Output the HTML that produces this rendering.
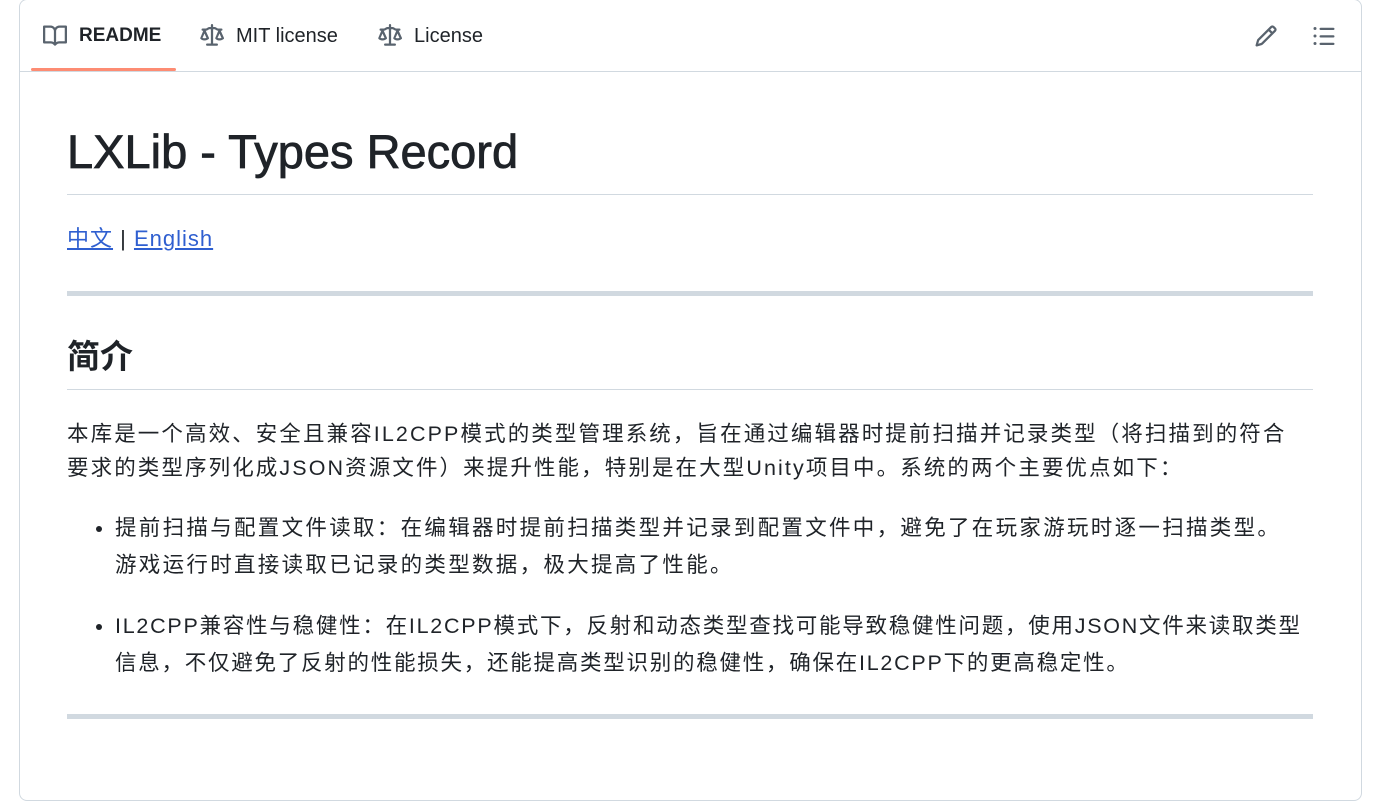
<!DOCTYPE html>
<html><head><meta charset="utf-8"><style>
body{margin:0;background:#fff;font-family:"Liberation Sans","Noto Sans CJK SC",sans-serif;color:#1f2328;width:1388px;height:751px;overflow:hidden;position:relative}
.box{position:absolute;left:19px;top:-1px;width:1341px;height:800px;border:1px solid #d1d9e0;border-radius:8px}
.hdr{position:absolute;left:0;right:0;top:0;height:71px;border-bottom:1px solid #d1d9e0}
.tab{position:absolute;top:24px;font-size:20px;display:flex;align-items:center;gap:12px}
.ul{position:absolute;left:11px;width:145px;top:68px;height:3px;background:#fd8c73;border-radius:2px}
.c{position:absolute;left:67px;width:1246px}
a{color:#2f5fd0;text-decoration:underline}
.hr{position:absolute;left:67px;width:1246px;height:5px;background:#d1d9e0}
p{margin:0}
.t{font-size:21.5px;letter-spacing:1.5px;white-space:nowrap}
</style></head><body>
<div class="box">
<div class="hdr">
<div class="tab" style="left:23px;font-weight:bold;font-size:19px"><svg width="24" height="24" viewBox="0 0 16 16" fill="#59636e"><path d="M0 1.75A.75.75 0 0 1 .75 1h4.253c1.227 0 2.317.59 3 1.501A3.743 3.743 0 0 1 11.006 1h4.245a.75.75 0 0 1 .75.75v10.5a.75.75 0 0 1-.75.75h-4.507a2.25 2.25 0 0 0-1.591.659l-.622.621a.75.75 0 0 1-1.060 0l-.622-.621A2.25 2.25 0 0 0 5.258 13H.75a.75.75 0 0 1-.75-.75Zm7.251 10.324.004-5.073-.002-2.253A2.25 2.25 0 0 0 5.003 2.5H1.5v9h3.757a3.75 3.75 0 0 1 1.994.574ZM8.755 4.75l-.004 7.322a3.752 3.752 0 0 1 1.992-.572H14.5v-9h-3.495a2.25 2.25 0 0 0-2.25 2.25Z"/></svg>README</div>
<div class="tab" style="left:180px"><svg width="24" height="24" viewBox="0 0 16 16" fill="#59636e"><path d="M8.75.75V2h.985c.304 0 .603.08.867.231l1.29.736c.038.022.08.033.124.033h2.234a.75.75 0 0 1 0 1.5h-.427l2.111 4.692a.75.75 0 0 1-.154.838C15.2 10.5 14.2 11 13 11s-2.2-.5-2.6-.97a.75.75 0 0 1-.154-.838L12.178 4.5h-.162c-.305 0-.604-.079-.868-.231l-1.29-.736a.245.245 0 0 0-.124-.033H8.75V13h2.5a.75.75 0 0 1 0 1.5h-6.5a.75.75 0 0 1 0-1.5h2.5V3.5h-.984a.245.245 0 0 0-.124.033l-1.289.737c-.265.15-.564.23-.869.23h-.162l2.112 4.692a.75.75 0 0 1-.154.838C5.2 10.5 4.2 11 3 11s-2.2-.5-2.6-.97a.75.75 0 0 1-.154-.838L2.178 4.5H1.75a.75.75 0 0 1 0-1.5h2.234a.249.249 0 0 0 .125-.033l1.288-.737c.265-.15.564-.23.869-.23h.984V.75a.75.75 0 0 1 1.5 0Zm2.945 8.477c.285.135.718.273 1.305.273s1.02-.138 1.305-.273L13 6.327Zm-10 0c.285.135.718.273 1.305.273s1.02-.138 1.305-.273L3 6.327Z"/></svg>MIT license</div>
<div class="tab" style="left:358px"><svg width="24" height="24" viewBox="0 0 16 16" fill="#59636e"><path d="M8.75.75V2h.985c.304 0 .603.08.867.231l1.29.736c.038.022.08.033.124.033h2.234a.75.75 0 0 1 0 1.5h-.427l2.111 4.692a.75.75 0 0 1-.154.838C15.2 10.5 14.2 11 13 11s-2.2-.5-2.6-.97a.75.75 0 0 1-.154-.838L12.178 4.5h-.162c-.305 0-.604-.079-.868-.231l-1.290-.736a.245.245 0 0 0-.124-.033H8.75V13h2.5a.75.75 0 0 1 0 1.5h-6.5a.75.75 0 0 1 0-1.5h2.5V3.5h-.984a.245.245 0 0 0-.124.033l-1.289.737c-.265.15-.564.23-.869.23h-.162l2.112 4.692a.75.75 0 0 1-.154.838C5.2 10.5 4.2 11 3 11s-2.2-.5-2.6-.97a.75.75 0 0 1-.154-.838L2.178 4.5H1.75a.75.75 0 0 1 0-1.5h2.234a.249.249 0 0 0 .125-.033l1.288-.737c.265-.15.564-.23.869-.23h.984V.75a.75.75 0 0 1 1.5 0Zm2.945 8.477c.285.135.718.273 1.305.273s1.020-.138 1.305-.273L13 6.327Zm-10 0c.285.135.718.273 1.305.273s1.020-.138 1.305-.273L3 6.327Z"/></svg>License</div>
<div class="ul"></div>
<svg style="position:absolute;left:1234px;top:24px" width="24" height="24" viewBox="0 0 16 16" fill="#59636e"><path d="M11.013 1.427a1.75 1.75 0 0 1 2.474 0l1.086 1.086a1.75 1.75 0 0 1 0 2.474l-8.61 8.61c-.21.21-.47.364-.756.445l-3.251.93a.75.75 0 0 1-.927-.928l.929-3.250c.081-.286.235-.547.445-.758l8.61-8.61Zm.176 4.823L9.75 4.81l-6.286 6.287a.253.253 0 0 0-.064.108l-.558 1.953 1.953-.558a.253.253 0 0 0 .108-.064Zm1.238-3.763a.25.25 0 0 0-.354 0L10.811 3.75l1.439 1.44 1.263-1.263a.25.25 0 0 0 0-.354Z"/></svg>
<svg style="position:absolute;left:1292px;top:24px" width="24" height="24" viewBox="0 0 16 16" fill="#59636e"><path d="M5.75 2.5h8.5a.75.75 0 0 1 0 1.5h-8.5a.75.75 0 0 1 0-1.5Zm0 5h8.5a.75.75 0 0 1 0 1.5h-8.5a.75.75 0 0 1 0-1.5Zm0 5h8.5a.75.75 0 0 1 0 1.5h-8.5a.75.75 0 0 1 0-1.5ZM2 14a1 1 0 1 1 0-2 1 1 0 0 1 0 2Zm1-6a1 1 0 1 1-2 0 1 1 0 0 1 2 0ZM2 4a1 1 0 1 1 0-2 1 1 0 0 1 0 2Z"/></svg>
</div>
</div>
<div class="c" style="top:122px;font-size:47px;line-height:60px;height:72px;border-bottom:1px solid #d1d9e0;-webkit-text-stroke:0.8px #1f2328">LXLib - Types Record</div>
<div class="c" style="top:222px;font-size:22px;line-height:34px;letter-spacing:1px"><a href="#">中文</a> | <a href="#">English</a></div>
<div class="hr" style="top:291px"></div>
<div class="c" style="top:334px;font-size:33px;font-weight:bold;line-height:46px;height:55px;border-bottom:1px solid #d1d9e0">简介</div>
<div class="c t" style="top:417px;line-height:34px;letter-spacing:2.1px"><p>本库是一个高效、安全且兼容IL2CPP模式的类型管理系统，旨在通过编辑器时提前扫描并记录类型（将扫描到的符合<br>要求的类型序列化成JSON资源文件）来提升性能，特别是在大型Unity项目中。系统的两个主要优点如下：</p></div>
<ul class="c t" style="top:510px;line-height:37px;margin:0;padding:0 0 0 48px;box-sizing:border-box">
<li style="margin-bottom:24px;letter-spacing:2.3px">提前扫描与配置文件读取：在编辑器时提前扫描类型并记录到配置文件中，避免了在玩家游玩时逐一扫描类型。<br>游戏运行时直接读取已记录的类型数据，极大提高了性能。</li>
<li style="letter-spacing:1.75px">IL2CPP兼容性与稳健性：在IL2CPP模式下，反射和动态类型查找可能导致稳健性问题，使用JSON文件来读取类型<br>信息，不仅避免了反射的性能损失，还能提高类型识别的稳健性，确保在IL2CPP下的更高稳定性。</li>
</ul>
<div class="hr" style="top:714px"></div>
</body></html>
